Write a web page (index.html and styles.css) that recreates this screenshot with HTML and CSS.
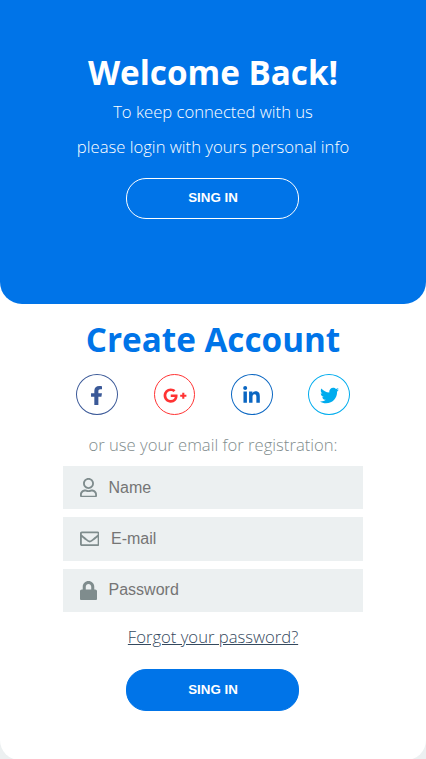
FILE: index.html
```html
<!DOCTYPE html>
<html lang="en">
<head>
<meta charset="utf-8">
<title>Create Account</title>
<link rel="stylesheet" href="styles.css">
</head>
<body>
<main class="card">
  <section class="welcome">
    <h2 class="title">Welcome Back!</h2>
    <p class="description">To keep connected with us</p>
    <p class="description line-two">please login with yours personal info</p>
    <button class="btn btn-outline">SING IN</button>
  </section>
  <section class="register">
    <h2 class="title title-primary">Create Account</h2>
    <ul class="social">
      <li class="facebook"><svg width="11" height="19" viewBox="22 0 272 512" preserveAspectRatio="none"><path d="M279.14 288l14.22-92.66h-88.91v-60.13c0-25.35 12.42-50.06 52.24-50.06h40.42V6.26S260.43 0 225.36 0c-73.22 0-121.08 44.38-121.08 124.72v70.62H22.89V288h81.39v224h100.17V288z"/></svg></li>
      <li class="google"><svg width="24" height="19" viewBox="0 0 640 512"><path d="M386.061 228.496c1.834 9.692 3.143 19.384 3.143 31.956C389.204 370.205 315.599 448 204.8 448c-106.084 0-192-85.915-192-192s85.916-192 192-192c51.864 0 95.083 18.859 128.611 50.292l-52.126 50.03c-14.145-13.621-39.028-29.599-76.485-29.599-65.484 0-118.92 54.221-118.92 121.277 0 67.056 53.436 121.277 118.92 121.277 75.961 0 104.513-54.745 108.965-82.773H204.8v-66.009h181.261zm185.406 6.437V179.2h-56.001v55.733h-55.733v56.001h55.733v55.733h56.001v-55.733H627.2v-56.001h-55.733z"/></svg></li>
      <li class="linkedin"><svg width="17" height="19" viewBox="0 0 448 512"><path d="M100.28 448H7.4V148.9h92.88zM53.79 108.1C24.09 108.1 0 83.5 0 53.8a53.79 53.79 0 0 1 107.58 0c0 29.7-24.1 54.3-53.79 54.3zM447.9 448h-92.68V302.4c0-34.7-.7-79.2-48.29-79.2-48.29 0-55.69 37.7-55.69 76.7V448h-92.78V148.9h89.08v40.8h1.3c12.4-23.5 42.69-48.3 87.88-48.3 94 0 111.28 61.9 111.28 142.3V448z"/></svg></li>
      <li class="twitter"><svg width="19" height="19" viewBox="0 0 512 512"><path d="M459.37 151.716c.325 4.548.325 9.097.325 13.645 0 138.72-105.583 298.558-298.558 298.558-59.452 0-114.68-17.219-161.137-47.106 8.447.974 16.568 1.299 25.34 1.299 49.055 0 94.213-16.568 130.274-44.832-46.132-.975-84.792-31.188-98.112-72.772 6.498.974 12.995 1.624 19.818 1.624 9.421 0 18.843-1.3 27.614-3.573-48.081-9.747-84.143-51.98-84.143-102.985v-1.299c13.969 7.797 30.214 12.67 47.431 13.319-28.264-18.843-46.781-51.005-46.781-87.391 0-19.492 5.197-37.36 14.294-52.954 51.655 63.675 129.3 105.258 216.365 109.807-1.624-7.797-2.599-15.918-2.599-24.04 0-57.828 46.782-104.934 104.934-104.934 30.213 0 57.502 12.67 76.67 33.137 23.715-4.548 46.456-13.32 66.599-25.34-7.798 24.366-24.366 44.833-46.132 57.827 21.117-2.273 41.584-8.122 60.426-16.243-14.292 20.791-32.161 39.308-52.628 54.253z"/></svg></li>
    </ul>
    <p class="hint">or use your email for registration:</p>
    <form class="form">
      <label class="field"><svg width="17" height="19.5" viewBox="0 0 448 512"><path d="M313.6 304c-28.7 0-42.5 16-89.6 16-47.1 0-60.8-16-89.6-16C60.2 304 0 364.2 0 438.4V464c0 26.5 21.5 48 48 48h352c26.5 0 48-21.5 48-48v-25.6c0-74.2-60.2-134.4-134.4-134.4zM400 464H48v-25.6c0-47.6 38.8-86.4 86.4-86.4 14.6 0 38.3 16 89.6 16 51.7 0 74.9-16 89.6-16 47.6 0 86.4 38.8 86.4 86.4V464zM224 288c79.5 0 144-64.5 144-144S303.5 0 224 0 80 64.5 80 144s64.5 144 144 144zm0-240c52.9 0 96 43.1 96 96s-43.1 96-96 96-96-43.1-96-96 43.1-96 96-96z"/></svg><input type="text" placeholder="Name"></label>
      <label class="field"><svg width="19.5" height="19.5" viewBox="0 0 512 512"><path d="M464 64H48C21.49 64 0 85.49 0 112v288c0 26.51 21.49 48 48 48h416c26.51 0 48-21.49 48-48V112c0-26.51-21.49-48-48-48zm0 48v40.805c-22.422 18.259-58.168 46.651-134.587 106.49-16.841 13.247-50.201 45.072-73.413 44.701-23.208.375-56.579-31.459-73.413-44.701C106.18 199.465 70.425 171.067 48 152.805V112h416zM48 400V214.398c22.914 18.251 55.409 43.862 104.938 82.646 21.857 17.205 60.134 55.186 103.062 54.955 42.717.231 80.509-37.199 103.053-54.947 49.528-38.783 82.032-64.401 104.947-82.653V400H48z"/></svg><input type="email" placeholder="E-mail"></label>
      <label class="field"><svg width="17" height="19.5" viewBox="0 0 448 512"><path d="M400 224h-24v-72C376 68.2 307.8 0 224 0S72 68.2 72 152v72H48c-26.5 0-48 21.5-48 48v192c0 26.5 21.5 48 48 48h352c26.5 0 48-21.5 48-48V272c0-26.5-21.5-48-48-48zm-104 0H152v-72c0-39.7 32.3-72 72-72s72 32.3 72 72v72z"/></svg><input type="password" placeholder="Password"></label>
    </form>
    <a class="forgot" href="#">Forgot your password?</a>
    <button class="btn btn-solid">SING IN</button>
  </section>
</main>
</body>
</html>
```
FILE: styles.css
```css
* {
  box-sizing: border-box;
  margin: 0;
  padding: 0;
}

body {
  height: 759px;
  overflow: hidden;
  background: #ecf0f1;
  font-family: "Open Sans", sans-serif;
}

.card {
  height: 760px;
  border-radius: 0 0 20px 20px;
  background: #fff;
}

.welcome,
.register {
  display: flex;
  flex-direction: column;
  align-items: center;
}

.welcome {
  height: 304px;
  padding-top: 49px;
  border-radius: 0 0 22px 22px;
  background: #0074e8;
  color: #fff;
}

.title {
  font-size: 33.25px;
  font-weight: 700;
  line-height: 46px;
  white-space: nowrap;
}

.title-primary {
  color: #0074e8;
}

.description {
  font-size: 16.65px;
  font-weight: 300;
  line-height: 34px;
  white-space: nowrap;
}

.line-two {
  margin-top: 1px;
}

.btn {
  width: 173px;
  height: 41px;
  margin-right: 1px;
  padding: 0 0 2px 1px;
  border: 1px solid #fff;
  border-radius: 20px;
  color: #fff;
  font: 700 13.33px "Liberation Sans", sans-serif;
}

.btn-outline {
  margin-top: 14px;
  background: transparent;
}

.btn-solid {
  height: 42px;
  margin-top: 20px;
  border-color: #0074e8;
  background: #0074e8;
}

.register {
  padding-top: 12px;
}

.social {
  display: flex;
  gap: 35.4px;
  margin-top: 12px;
  list-style: none;
}

.social li {
  display: flex;
  align-items: center;
  justify-content: center;
  width: 42px;
  height: 41px;
  border: 1px solid currentColor;
  border-radius: 50%;
  padding-top: 2px;
}

.social .google {
  width: 41px;
  margin-left: 1px;
}

svg {
  display: block;
  flex: none;
  fill: currentColor;
}

.facebook { color: #3b5998; }
.google { color: #ff3333; }
.linkedin { color: #0a66c2; }
.twitter { color: #00acee; }

.hint {
  margin-top: 18px;
  color: #7f8c8d;
  font-size: 16.65px;
  font-weight: 300;
  line-height: 23px;
  white-space: nowrap;
}

.form {
  display: flex;
  flex-direction: column;
  gap: 8px;
  margin-top: 10px;
}

.field {
  display: flex;
  align-items: center;
  gap: 11.6px;
  width: 299.5px;
  height: 43.4px;
  padding-left: 16.7px;
  background: #ecf0f1;
  color: #7f8c8d;
}

.field input {
  flex: 1;
  min-width: 0;
  border: 0;
  background: transparent;
  font: 16px "Liberation Sans", sans-serif;
}

.field input::placeholder {
  color: #757575;
}

.forgot {
  margin-top: 13px;
  color: #34495e;
  font-size: 16.65px;
  font-weight: 300;
  line-height: 24px;
}
```
